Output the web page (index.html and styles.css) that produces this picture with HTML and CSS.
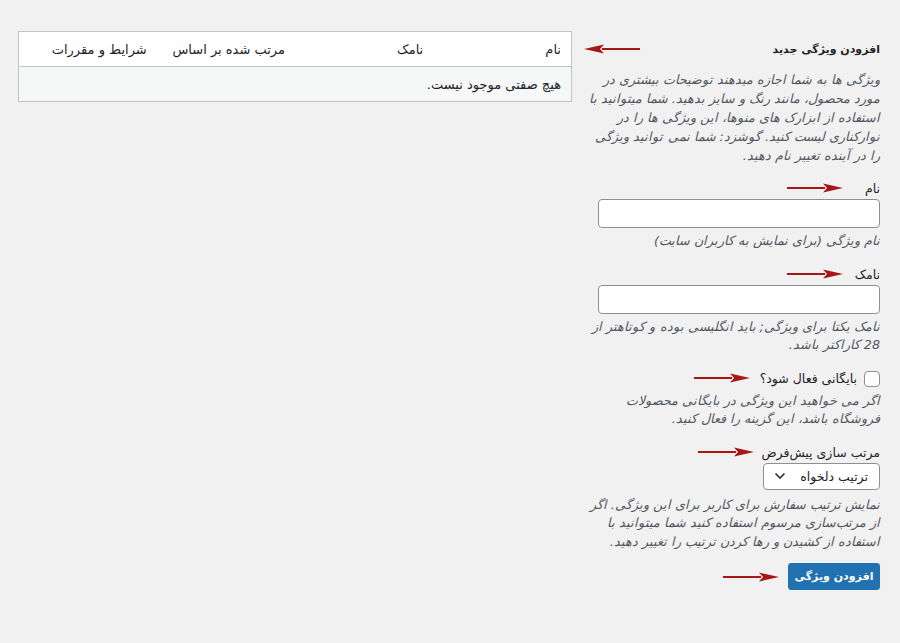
FILE: index.html
```html
<!DOCTYPE html>
<html lang="fa" dir="rtl">
<head>
    <meta charset="utf-8">
    <link rel="stylesheet" href="styles.css">
</head>
<body>
    <div class="wrap">
        <div class="col-form">
            <h2 class="form-title">
                افزودن ویژگی جدید
                <svg class="arrow arrow-title" width="56" height="10" viewBox="0 0 56 10"><path d="M56 5H18" stroke="#a81616" stroke-width="2"/><path d="M0 5L20 0.5L16 5L20 9.5Z" fill="#a81616"/></svg>
            </h2>
            <p class="intro">ویژگی ها به شما اجازه میدهند توضیحات بیشتری در مورد محصول، مانند رنگ و سایز بدهید. شما میتوانید با استفاده از ابزارک های منوها، این ویژگی ها را در نوارکناری لیست کنید. گوشزد: شما نمی توانید ویژگی را در آینده تغییر نام دهید.</p>

            <div class="field">
                <label class="field-label">نام</label>
                <svg class="arrow arrow-name" width="56" height="10" viewBox="0 0 56 10"><path d="M0 5H38" stroke="#a81616" stroke-width="2"/><path d="M56 5L36 0.5L40 5L36 9.5Z" fill="#a81616"/></svg>
                <input type="text" class="text-input">
                <p class="help">نام ویژگی (برای نمایش به کاربران سایت)</p>
            </div>

            <div class="field">
                <label class="field-label">نامک</label>
                <svg class="arrow arrow-name" width="56" height="10" viewBox="0 0 56 10"><path d="M0 5H38" stroke="#a81616" stroke-width="2"/><path d="M56 5L36 0.5L40 5L36 9.5Z" fill="#a81616"/></svg>
                <input type="text" class="text-input">
                <p class="help">نامک یکتا برای ویژگی; باید انگلیسی بوده و کوتاهتر از 28 کاراکتر باشد.</p>
            </div>

            <div class="field field-check">
                <label class="check-label"><span class="checkbox"></span>بایگانی فعال شود؟</label>
                <svg class="arrow arrow-check" width="56" height="10" viewBox="0 0 56 10"><path d="M0 5H38" stroke="#a81616" stroke-width="2"/><path d="M56 5L36 0.5L40 5L36 9.5Z" fill="#a81616"/></svg>
                <p class="help help-check">اگر می خواهید این ویژگی در بایگانی محصولات فروشگاه باشد، این گزینه را فعال کنید.</p>
            </div>

            <div class="field field-sort">
                <label class="field-label">مرتب سازی پیش‌فرض</label>
                <svg class="arrow arrow-sort" width="56" height="10" viewBox="0 0 56 10"><path d="M0 5H38" stroke="#a81616" stroke-width="2"/><path d="M56 5L36 0.5L40 5L36 9.5Z" fill="#a81616"/></svg>
                <div class="select">
                    <span>ترتیب دلخواه</span>
                    <svg width="12" height="8" viewBox="0 0 12 8"><path d="M1.5 1.5L6 6L10.5 1.5" fill="none" stroke="#2c3338" stroke-width="1.6"/></svg>
                </div>
                <p class="help">نمایش ترتیب سفارش برای کاربر برای این ویژگی. اگر از مرتب‌سازی مرسوم استفاده کنید شما میتوانید با استفاده از کشیدن و رها کردن ترتیب را تغییر دهید.</p>
            </div>

            <div class="field submit">
                <button class="button-primary">افزودن ویژگی</button>
                <svg class="arrow arrow-button" width="56" height="10" viewBox="0 0 56 10"><path d="M0 5H38" stroke="#a81616" stroke-width="2"/><path d="M56 5L36 0.5L40 5L36 9.5Z" fill="#a81616"/></svg>
            </div>
        </div>

        <div class="col-table">
            <table class="attr-table">
                <thead>
                    <tr>
                        <th>نام</th>
                        <th>نامک</th>
                        <th>مرتب شده بر اساس</th>
                        <th>شرایط و مقررات</th>
                    </tr>
                </thead>
                <tbody>
                    <tr>
                        <td colspan="4">هیچ صفتی موجود نیست.</td>
                    </tr>
                </tbody>
            </table>
        </div>
    </div>
</body>
</html>
```

FILE: styles.css
```css
body {
    margin: 0;
    background: #f1f1f1;
    color: #1d2327;
    font-family: Tahoma, "DejaVu Sans", sans-serif;
    font-size: 13px;
}

.wrap {
    display: flex;
    gap: 16px;
    padding: 30px 20px 0 18px;
}

.col-form {
    width: 292px;
    flex-shrink: 0;
}

.col-table {
    flex: 1;
}

.form-title {
    position: relative;
    margin: 10px 0 0;
    font-size: 11px;
    font-weight: bold;
    line-height: 20px;
}

.arrow {
    position: absolute;
}

.arrow-title {
    top: 4px;
    right: 240px;
}

.intro {
    margin: 10px 0 0;
    color: #50575e;
    font-style: italic;
    font-size: 12.7px;
    line-height: 19px;
}

.field {
    position: relative;
    margin-top: 15px;
}

.field-label {
    display: block;
    font-size: 12.5px;
    line-height: 18px;
    padding-bottom: 1px;
}

.arrow-name {
    top: 3px;
    right: 37px;
}

.text-input {
    display: block;
    box-sizing: border-box;
    width: 282px;
    height: 29px;
    margin: 0 0 0 auto;
    border: 1px solid #8c8f94;
    border-radius: 4px;
    background: #fff;
}

.help {
    margin: 4px 0 0;
    color: #50575e;
    font-style: italic;
    font-size: 12.7px;
    line-height: 18.5px;
}

.field-check {
    margin-top: 15px;
}

.check-label {
    display: flex;
    align-items: center;
    gap: 7px;
    font-size: 12.5px;
    line-height: 18px;
}

.checkbox {
    width: 14px;
    height: 14px;
    border: 1px solid #8c8f94;
    border-radius: 4px;
    background: #fff;
}

.arrow-check {
    top: 3px;
    right: 130px;
}

.help-check {
    margin-top: 4px;
}

.field-sort {
    margin-top: 15px;
}

.arrow-sort {
    top: 3px;
    right: 126px;
}

.select {
    box-sizing: border-box;
    width: 117px;
    height: 27px;
    display: flex;
    align-items: center;
    justify-content: space-between;
    padding: 0 11px 0 10px;
    border: 1px solid #8c8f94;
    border-radius: 4px;
    background: #fff;
    font-size: 12.5px;
}

.field-sort .help {
    margin-top: 6px;
}

.submit {
    margin-top: 12px;
}

.button-primary {
    display: block;
    height: 27px;
    width: 92px;
    padding: 0;
    border: 1px solid #2271b1;
    border-radius: 3px;
    background: #2271b1;
    color: #fff;
    font-family: inherit;
    font-size: 11px;
    font-weight: bold;
}

.arrow-button {
    top: 9px;
    right: 101px;
}

.attr-table {
    width: 100%;
    border-collapse: collapse;
    border: 1px solid #c3c4c7;
    background: #fff;
    margin-top: 1px;
}

.attr-table th {
    width: 25%;
    text-align: right;
    font-weight: normal;
    font-size: 13px;
    height: 34px;
    padding: 0 10px;
    border-bottom: 1px solid #c3c4c7;
}

.attr-table td {
    background: #f6f7f7;
    height: 34px;
    padding: 0 10px;
    font-size: 13px;
}
```
